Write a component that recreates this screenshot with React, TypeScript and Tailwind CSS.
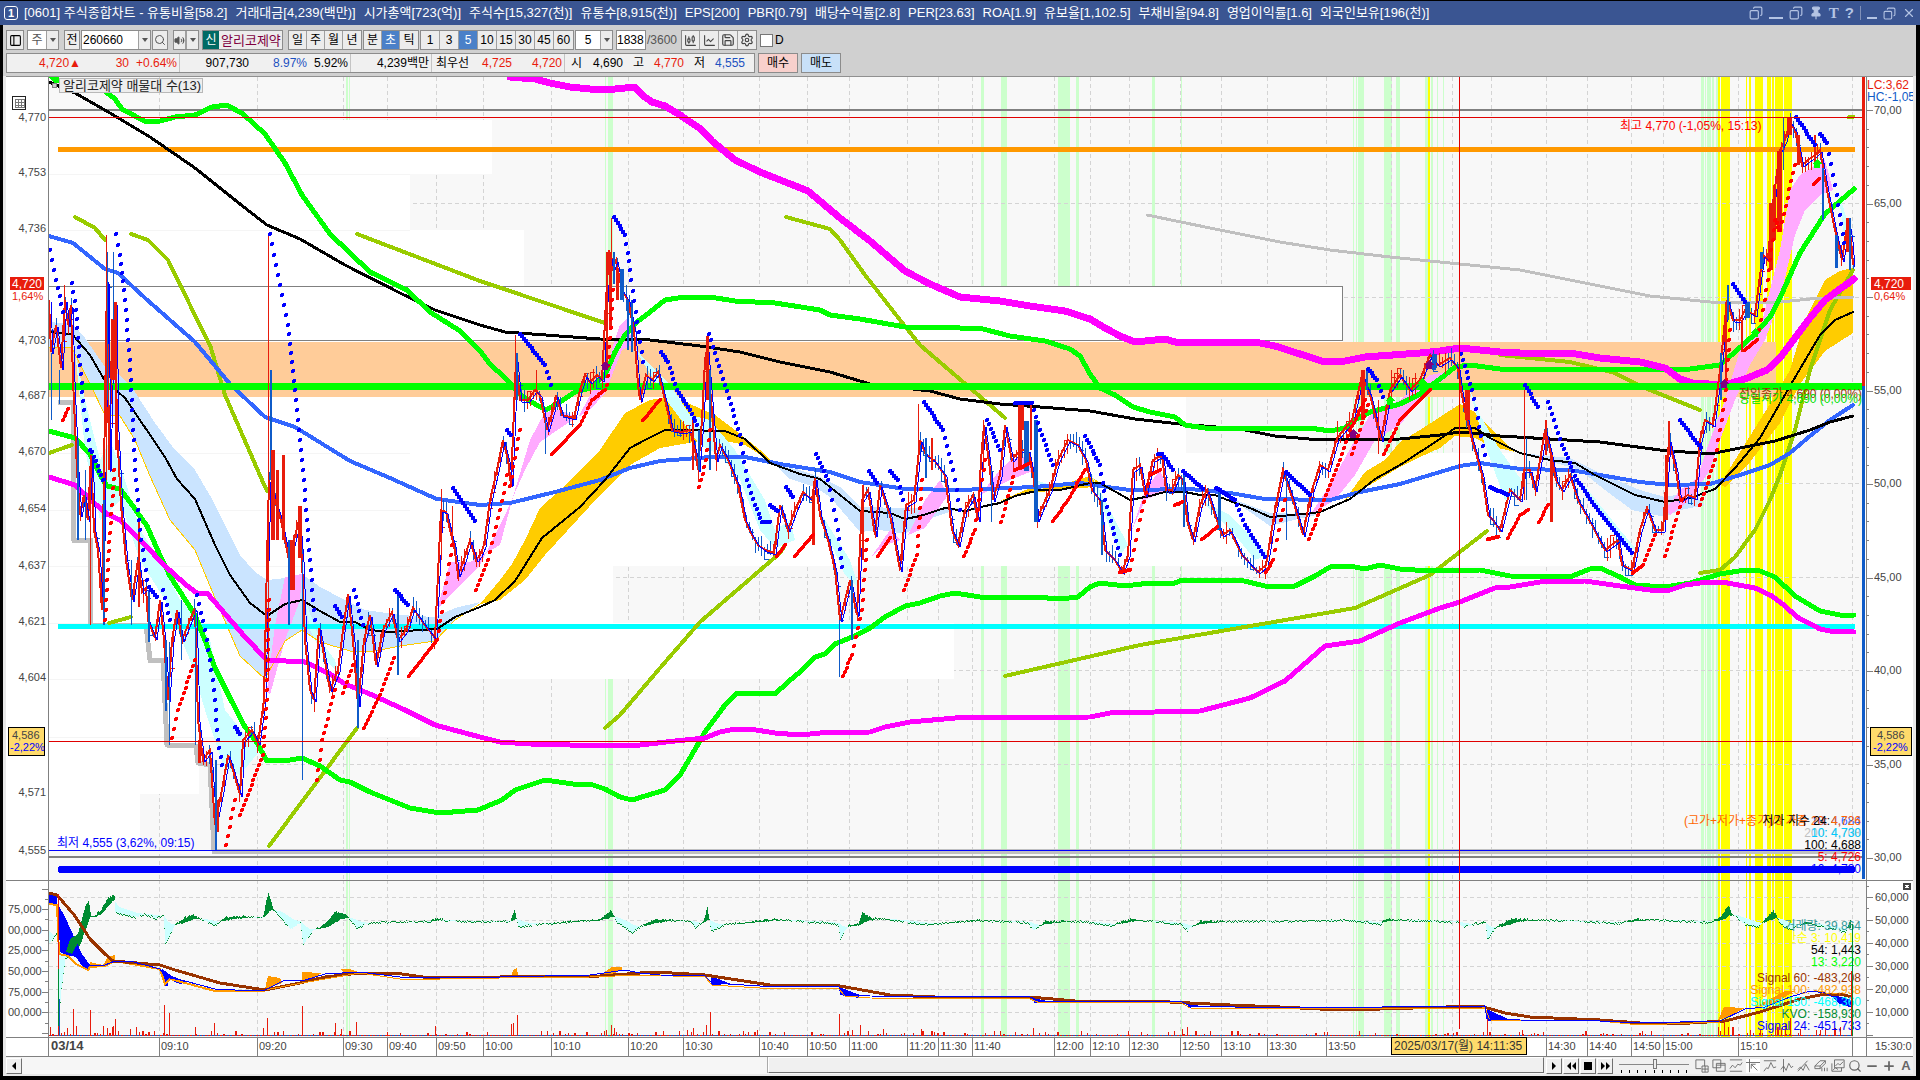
import React from "react";
import {
  Search, Volume2, Save, Settings, Pin, X, Copy, Minus, Plus,
  CandlestickChart, LineChart, PanelLeft,
} from "lucide-react";

type Pt = [number, number];

const parse = (s: string): Pt[] =>
  s.trim().split(/\s+/).map((p) => p.split(",").map(Number) as Pt);

const valueAt = (pts: Pt[], x: number): number => {
  for (let i = 1; i < pts.length; i++) {
    if (x <= pts[i][0]) {
      const [x0, y0] = pts[i - 1];
      const [x1, y1] = pts[i];
      return x1 === x0 ? y1 : y0 + ((y1 - y0) * (x - x0)) / (x1 - x0);
    }
  }
  return pts[pts.length - 1][1];
};

const noise = (n: number): number => {
  const v = Math.sin(n * 12.9898) * 43758.5453;
  return v - Math.floor(v);
};

const TIMES: [number, string][] = [
  [159, "09:10"], [257, "09:20"], [343, "09:30"], [387, "09:40"], [436, "09:50"],
  [483, "10:00"], [551, "10:10"], [628, "10:20"], [683, "10:30"], [759, "10:40"],
  [807, "10:50"], [849, "11:00"], [907, "11:20"], [938, "11:30"], [972, "11:40"],
  [1054, "12:00"], [1090, "12:10"], [1129, "12:30"], [1180, "12:50"], [1221, "13:10"],
  [1267, "13:30"], [1326, "13:50"], [1391, ""], [1452, ""], [1491, ""], [1546, "14:30"],
  [1587, "14:40"], [1631, "14:50"], [1663, "15:00"], [1738, "15:10"], [1852, ""],
];

const GREEN_BANDS: Pt[] = [
  [346, 2], [349, 1], [605, 1], [608, 5], [981, 3], [1001, 6], [1058, 12], [1076, 3],
  [1152, 3], [1181, 1], [1353, 1], [1356, 1], [1358, 6], [1384, 8], [1396, 4], [1425, 3],
  [1431, 2], [1437, 1], [1443, 1], [1701, 3], [1705, 1], [1707, 4], [1712, 2], [1716, 2],
];
const YELLOW_BANDS: Pt[] = [
  [1428, 2], [1718, 2], [1721, 9], [1746, 1], [1749, 2], [1755, 8], [1767, 4], [1772, 2],
  [1775, 8], [1784, 8],
];

const VOLUME_PROFILE: [number, number, number][] = [
  [120, 54, 492], [174, 56, 410], [230, 56, 524], [286, 56, 1343], [397, 56, 1186],
  [453, 57, 1514], [510, 56, 1630], [566, 57, 613], [623, 56, 954], [679, 58, 420],
  [737, 57, 199], [794, 57, 140],
];

const PRICE = parse(`49,300 51,352 56,325 61,368 65,300 68,325 71,305 73,380 77,470 80,515 84,495 88,520 91,455 94,530 98,550
102,610 104,470 107,280 109,470 112,340 115,302 117,430 121,505 126,560 132,600 138,560 142,592 146,588 148,620 155,638 160,600
164,640 168,700 172,640 177,610 182,640 190,620 195,608 198,720 203,760 210,750 215,825 222,790 228,755 233,770 240,795 243,740
252,730 258,743 264,700 267,560 269,480 275,500 281,520 289,560 294,540 299,520 302,560 305,640 310,690 314,700 319,628 323,650
330,690 338,670 343,630 348,594 353,640 358,705 364,640 370,615 376,665 383,630 392,612 398,640 406,630 413,608 425,625 435,638
441,510 446,512 450,530 454,545 458,575 464,560 470,540 476,560 480,555 484,545 490,500 497,470 503,440 508,460 511,485 516,360
520,400 528,400 535,390 540,395 547,430 553,410 556,395 562,415 574,418 580,390 585,375 590,382 597,375 602,380 606,300 609,250
612,270 616,260 622,290 628,300 634,330 638,385 640,400 646,375 652,380 658,372 665,400 672,430 682,432 690,430 696,455 698,470
702,420 705,360 707,350 711,400 716,460 720,445 728,460 738,485 745,520 752,535 758,545 765,550 774,553 780,505 788,530 795,510
803,492 812,500 815,478 820,515 828,540 835,570 840,620 850,580 857,615 862,500 868,490 875,535 880,485 890,515 900,570 906,505
914,500 920,440 926,455 934,460 945,475 952,530 958,545 965,510 973,495 978,520 981,460 984,425 990,470 993,500 1000,475 1005,425
1012,460 1020,450 1028,450 1034,480 1037,520 1043,505 1050,490 1058,460 1068,440 1078,445 1086,460 1092,490 1100,500 1105,550
1115,560 1122,572 1128,555 1133,470 1140,465 1145,495 1153,460 1162,455 1166,490 1172,490 1178,475 1183,480 1187,520 1193,540
1200,505 1207,490 1215,515 1222,535 1230,530 1242,555 1258,572 1266,565 1275,510 1283,470 1293,500 1303,535 1312,490 1320,465
1328,470 1337,438 1352,420 1362,375 1370,395 1381,440 1390,390 1400,375 1410,390 1420,380 1430,355 1438,365 1450,358 1458,368
1461,390 1466,415 1472,440 1478,460 1482,475 1488,515 1493,520 1500,530 1510,490 1520,500 1524,470 1530,470 1535,490 1545,430
1550,450 1556,480 1562,490 1570,475 1578,500 1592,525 1605,550 1618,540 1622,565 1632,570 1640,530 1647,508 1655,530 1663,530
1669,440 1676,470 1680,500 1688,495 1695,498 1700,440 1705,420 1713,425 1720,370 1725,320 1727,300 1733,320 1740,320 1745,310
1755,315 1760,275 1763,255 1768,260 1772,210 1776,180 1780,150 1785,140 1790,122 1795,130 1802,165 1808,160 1815,155 1820,150
1827,190 1835,230 1842,260 1848,220 1851,240 1853,265`);

const SPIKES: [number, number, number, number, string][] = [
  [51, 353, 420, 1, "#0f5bc8"], [59, 370, 404, 1, "#0f5bc8"], [64, 285, 340, 1, "#e81c0c"],
  [77, 440, 540, 2, "#0f5bc8"], [85, 470, 540, 1, "#0f5bc8"], [90, 455, 625, 1, "#e81c0c"],
  [103, 500, 625, 2, "#0f5bc8"], [106, 235, 480, 1, "#e81c0c"], [107, 252, 400, 1, "#0f5bc8"],
  [111, 319, 380, 4, "#e81c0c"], [113, 252, 320, 1, "#0f5bc8"], [115, 302, 450, 2, "#e81c0c"],
  [131, 560, 625, 1, "#0f5bc8"], [148, 590, 642, 2, "#0f5bc8"], [138, 522, 607, 2, "#e81c0c"],
  [165, 640, 711, 2, "#0f5bc8"], [169, 642, 745, 1, "#0f5bc8"], [181, 600, 660, 1, "#0f5bc8"],
  [195, 608, 745, 1, "#0f5bc8"], [198, 740, 763, 3, "#e81c0c"], [215, 760, 850, 2, "#0f5bc8"],
  [217, 800, 832, 2, "#e81c0c"], [268, 235, 680, 1, "#e81c0c"], [270, 370, 480, 2, "#0f5bc8"],
  [271, 450, 540, 4, "#e81c0c"], [276, 470, 540, 3, "#e81c0c"], [282, 455, 540, 3, "#e81c0c"],
  [288, 540, 625, 2, "#0f5bc8"], [290, 540, 590, 5, "#e81c0c"], [298, 506, 558, 4, "#e81c0c"],
  [302, 560, 780, 1, "#0f5bc8"], [357, 640, 728, 2, "#0f5bc8"], [397, 590, 675, 2, "#0f5bc8"],
  [441, 489, 560, 1, "#e81c0c"], [452, 506, 540, 1, "#e81c0c"], [515, 335, 400, 1, "#e81c0c"],
  [516, 353, 400, 2, "#0f5bc8"], [536, 370, 400, 1, "#e81c0c"], [545, 420, 454, 1, "#0f5bc8"],
  [606, 252, 370, 2, "#e81c0c"], [611, 218, 290, 1, "#e81c0c"], [609, 252, 330, 3, "#e81c0c"],
  [613, 252, 284, 2, "#0f5bc8"], [616, 268, 300, 3, "#e81c0c"], [620, 269, 300, 4, "#0f5bc8"],
  [627, 300, 350, 2, "#0f5bc8"], [631, 300, 352, 2, "#0f5bc8"], [692, 420, 470, 2, "#e81c0c"],
  [698, 430, 470, 2, "#0f5bc8"], [706, 336, 400, 3, "#e81c0c"], [709, 370, 470, 2, "#0f5bc8"],
  [812, 490, 545, 3, "#e81c0c"], [839, 620, 677, 1, "#0f5bc8"], [851, 580, 640, 2, "#0f5bc8"],
  [862, 485, 560, 2, "#e81c0c"], [918, 404, 450, 1, "#e81c0c"], [925, 438, 478, 2, "#0f5bc8"],
  [931, 438, 470, 2, "#e81c0c"], [983, 420, 470, 1, "#e81c0c"], [991, 470, 522, 1, "#0f5bc8"],
  [1018, 404, 470, 4, "#e81c0c"], [1024, 421, 471, 5, "#0f5bc8"], [1022, 404, 430, 2, "#e81c0c"],
  [1030, 404, 450, 2, "#e81c0c"], [1034, 420, 522, 4, "#0f5bc8"], [1101, 500, 555, 2, "#0f5bc8"],
  [1183, 472, 527, 2, "#0f5bc8"], [1218, 490, 530, 3, "#0f5bc8"], [1286, 472, 540, 1, "#0f5bc8"],
  [1337, 421, 440, 1, "#e81c0c"], [1361, 370, 420, 4, "#e81c0c"], [1366, 370, 390, 2, "#0f5bc8"],
  [1378, 400, 454, 1, "#e81c0c"], [1391, 370, 400, 1, "#e81c0c"], [1432, 354, 370, 4, "#0f5bc8"],
  [1465, 390, 420, 5, "#e81c0c"], [1524, 390, 500, 1, "#e81c0c"], [1526, 438, 500, 1, "#0f5bc8"],
  [1545, 420, 455, 2, "#e81c0c"], [1550, 455, 522, 3, "#e81c0c"], [1665, 455, 520, 3, "#e81c0c"],
  [1668, 421, 455, 2, "#e81c0c"], [1720, 353, 400, 2, "#0f5bc8"], [1725, 302, 385, 2, "#e81c0c"],
  [1727, 285, 320, 2, "#0f5bc8"], [1741, 320, 352, 2, "#e81c0c"], [1745, 302, 318, 5, "#0f5bc8"],
  [1760, 252, 269, 3, "#0f5bc8"], [1769, 203, 270, 4, "#e81c0c"], [1773, 185, 240, 3, "#e81c0c"],
  [1777, 151, 232, 5, "#e81c0c"], [1783, 118, 170, 1, "#0f5bc8"], [1787, 117, 135, 5, "#e81c0c"],
  [1797, 135, 165, 3, "#e81c0c"], [1814, 135, 166, 2, "#e81c0c"], [1822, 168, 220, 2, "#0f5bc8"],
  [1835, 235, 268, 3, "#0f5bc8"], [1846, 218, 252, 3, "#e81c0c"], [1849, 218, 270, 2, "#0f5bc8"],
];

const SAR_BLUE = `50,250 56,280 63,312|72,283 76,310 80,365 84,410 90,450|92,452 103,480|116,234 120,255 124,290 130,360 133,430 136,480 140,530 147,580|149,587 157,597|163,590 170,620|197,595 205,630 213,680 218,740 222,765|235,727 240,734|270,234 278,275 288,325 295,390 300,440 304,480 309,550 315,620|335,606 342,617|354,590 363,625|395,590 408,605|453,488 475,521|507,430 511,435|520,334 545,365 551,385|614,217 625,235 630,270 637,322 643,362|661,352 668,362 677,390 690,410 697,425|709,334 725,385 740,435 747,480 755,505 762,522 770,522|786,487 793,497|770,505 778,511|816,454 828,480 838,530 842,567|869,471 877,483|890,471 898,480 903,500|924,402 943,430 953,470 960,510|987,420 1000,450|1015,403 1032,403 1040,430 1053,465|1085,436 1100,465 1105,500 1120,555|1158,454 1162,454 1173,470|1183,471 1203,489|1216,488 1235,500 1245,525 1265,557|1286,472 1310,495|1368,369 1377,380 1383,397|1461,354 1472,390 1485,455|1490,487 1508,495|1525,385 1538,407|1548,402 1562,445 1577,480 1598,510 1632,553|1680,420 1701,448|1733,284 1745,302|1796,117 1815,145|1820,134 1827,143 1835,185 1840,215 1844,243`.split("|").map(parse);
const SAR_RED = `63,420 68,409|105,620 108,560 112,505 114,470|172,738 178,710 195,660|226,845 235,800|240,815 263,755 267,700 269,600|317,780 322,740 335,690|343,693 353,665|364,728 380,695 394,658|409,676 437,640 452,545|476,590 488,560 500,510 507,475|510,486 520,430|552,454 580,425 592,400 605,390|607,385 613,290|643,420 660,400|699,487 706,460 710,430|777,556 785,545|795,556 813,535|843,676 852,655 862,610 867,540|878,556 890,538|904,590 917,555 922,480|964,556 975,530 985,460|1001,522 1010,490 1015,470 1030,463|1053,521 1068,500 1085,470|1120,572 1130,570 1140,520 1150,475 1160,470|1175,505 1182,502|1202,539 1217,527|1266,572 1273,560 1285,500|1309,539 1320,510 1340,460 1350,430 1365,400|1352,454 1368,405|1384,454 1400,420 1430,390|1488,539 1498,537|1508,538 1520,515 1528,510|1539,522 1548,505|1633,573 1643,565 1655,535|1665,556 1676,520 1682,500|1700,505 1715,460 1725,400 1730,330|1745,350 1757,340 1765,300 1775,220 1780,230 1795,165|1814,184 1819,179`.split("|").map(parse);

const OLIVE = [
  "75,217 95,228 105,240",
  "131,234 148,240 168,260 190,305 210,345 225,395 262,480 267,491",
  "357,234 480,281 605,323",
  "786,217 830,229 840,240 865,275 900,320 920,345 1005,418",
  "49,453 72,445", "109,623 131,617", "269,846 357,728",
  "605,728 620,715 660,668 700,622 780,553 785,545",
  "1005,676 1140,645 1355,608 1430,575 1487,531",
  "1500,355 1570,362 1615,373 1640,386 1700,410",
  "1700,573 1720,570 1735,557 1755,530 1770,500 1780,475 1795,430 1810,370 1830,310 1853,270",
  "1849,117 1853,117",
];

const SKY_CLOUDS = [
  "49,322 73,324 85,338 105,367 120,375 135,392 155,423 175,450 195,470 212,499 225,525 240,555 255,572 267,580 285,578 302,574 320,587 345,600 365,610 400,615 435,617 455,608 480,602 455,620 435,641 400,646 375,651 350,651 320,642 302,630 285,641 265,679 240,656 215,598 195,550 170,520 150,476 135,440 120,416 105,415 90,384 72,348 49,347",
  "775,465 800,470 820,477 840,487 860,507 905,508 930,508 960,508 950,512 925,520 905,534 880,530 860,532 830,497 815,487 790,479",
  "1230,498 1270,513 1305,514 1320,514 1290,521 1270,526",
  "1520,453 1570,458 1600,473 1640,490 1665,497 1690,492 1705,505 1680,510 1665,517 1632,510 1605,490 1580,470",
];
const GOLD_CLOUDS = [
  "480,604 500,580 512,564 525,540 540,508 560,490 600,450 625,413 650,400 670,397 690,404 715,415 735,430 760,450 775,464 745,445 725,441 700,441 660,448 630,465 600,495 545,555 525,580 500,600",
  "1000,501 1030,488 1060,485 1090,476 1105,486 1060,490 1030,493",
  "1345,500 1365,472 1385,460 1400,442 1420,430 1440,417 1460,404 1475,412 1490,428 1515,452 1490,446 1475,438 1455,436 1440,448 1420,457 1400,467 1375,482",
  "1720,484 1740,452 1770,404 1790,370 1805,320 1825,280 1840,271 1853,268 1853,333 1825,351 1800,384 1780,423 1750,462 1725,487",
];
const PINK_CLOUDS = [
  "267,690 275,625 285,577 302,574 300,600 285,640 270,695",
  "437,610 450,562 470,562 500,545 515,490 530,440 545,412 560,410 578,418 590,395 605,370 620,325 628,318 632,345 622,350 605,393 590,410 565,425 540,442 525,470 505,515 480,565 455,590",
  "872,556 890,530 900,540 885,545", "908,535 925,500 940,480 948,495 925,528",
  "980,495 1000,470 1010,460 1030,455 1035,470 1010,480 990,490",
  "1132,530 1145,490 1160,470 1168,490 1145,500",
  "1310,515 1330,485 1355,440 1370,415 1400,400 1430,375 1455,370 1420,400 1400,425 1375,440 1355,475 1335,500",
  "1665,510 1680,490 1695,480 1700,470 1710,440 1725,400 1740,350 1760,330 1770,290 1780,250 1790,190 1800,175 1815,165 1825,160 1833,190 1820,195 1805,210 1795,235 1780,300 1765,340 1750,365 1735,400 1720,440 1710,470 1690,500 1670,515",
];
const CYAN_CLOUDS = [
  "75,350 85,400 100,460 110,440 125,480 140,530 160,560 180,600 195,615 210,640 225,710 245,735 262,748 240,775 225,770 205,710 190,660 165,600 140,560 120,500 100,520 85,450",
  "305,600 320,640 335,660 340,675 325,660 310,630",
  "632,345 650,365 670,385 690,415 710,420 735,450 765,500 775,530 790,520 795,540 775,548 760,530 740,480 720,455 700,445 670,405",
  "820,512 850,560 860,590 845,575 825,530", "1035,480 1050,485 1040,490",
  "1092,475 1115,520 1128,545 1120,555 1105,515",
  "1200,500 1230,515 1268,555 1255,560 1235,535 1210,510",
  "1468,385 1480,415 1500,450 1525,485 1505,500 1485,445",
  "1580,480 1620,530 1637,550 1625,548 1600,515", "1838,190 1850,230 1846,250",
];

const LINES: [string, string, number][] = [
  ["#c0c0c0", "1147,215 1210,228 1280,242 1330,250 1390,257 1440,262 1460,264 1520,270 1580,282 1650,296 1710,302 1770,303 1810,299 1853,297", 3],
  ["#3366ff", "49,236 73,243 105,269 118,273 145,298 195,342 230,384 265,417 295,427 350,461 390,478 430,496 437,499 480,505 510,503 555,492 600,480 630,468 660,461 710,457 745,457 780,464 830,472 860,482 905,489 960,490 1035,487 1080,483 1100,486 1130,490 1190,489 1230,493 1265,499 1330,500 1360,492 1400,484 1440,472 1460,466 1480,463 1520,469 1570,470 1600,475 1640,482 1670,485 1710,484 1740,475 1770,465 1790,453 1810,436 1830,420 1853,405", 4],
  ["#000000", "49,82 75,93 110,113 150,137 195,168 245,208 267,225 300,239 345,265 400,293 435,310 480,325 505,332 600,339 650,340 700,346 740,352 780,362 830,372 870,384 930,391 960,399 1000,404 1040,407 1090,411 1135,419 1180,424 1240,429 1275,436 1320,440 1400,439 1440,435 1460,432 1500,436 1600,442 1660,450 1710,454 1740,448 1775,441 1810,430 1830,422 1853,416", 3],
  ["#00ff00", "106,92 115,99 122,109 135,116 146,122 160,121 175,117 195,115 212,107 227,105 243,114 265,134 285,163 302,195 330,234 370,272 407,290 430,312 460,331 480,351 490,364 505,378 522,396 535,404 546,410 560,402 575,392 590,388 605,375 615,352 625,335 637,322 650,312 665,300 685,297 710,297 735,301 775,303 820,310 830,315 860,319 905,327 960,328 983,329 1010,336 1045,341 1070,349 1080,356 1090,374 1100,388 1115,395 1133,407 1150,412 1175,417 1185,425 1205,428 1310,428 1330,431 1345,428 1355,420 1370,412 1400,404 1420,394 1440,379 1455,367 1470,365 1500,369 1670,369 1690,369 1720,365 1735,352 1755,334 1770,317 1780,298 1800,253 1825,214 1840,201 1854,189", 5],
  ["#00ff00", "49,431 75,438 90,454 102,478 107,486 120,489 130,502 147,526 158,551 170,576 195,615 205,640 215,668 230,698 245,727 257,743 267,761 290,760 302,758 320,766 340,780 350,782 370,792 390,800 410,808 440,813 478,810 502,800 515,790 545,780 580,785 590,784 605,789 620,797 632,800 645,796 665,790 680,775 690,758 705,732 725,705 737,693 775,694 788,682 800,672 815,657 825,654 835,644 855,636 870,628 885,617 905,606 920,603 940,596 955,593 980,597 1035,597 1060,599 1078,597 1090,587 1100,583 1125,586 1150,583 1175,583 1182,580 1240,580 1265,586 1295,586 1315,576 1330,567 1350,566 1365,569 1380,565 1400,569 1430,571 1480,570 1510,576 1570,577 1590,569 1600,568 1620,577 1635,585 1665,587 1690,583 1720,574 1745,570 1760,571 1775,577 1795,596 1820,611 1840,615 1854,615", 5],
  ["#ff00ff", "49,477 75,485 93,502 107,514 120,520 145,545 165,566 185,584 197,593 207,593 220,608 245,637 267,660 305,662 330,674 345,684 370,694 405,710 435,725 480,737 500,742 530,744 570,745 605,746 640,745 675,741 705,738 720,732 735,729 750,729 775,733 800,735 820,733 870,732 885,727 910,722 955,718 1090,717 1110,713 1200,711 1250,698 1285,681 1325,646 1360,641 1400,623 1440,608 1460,602 1495,588 1510,587 1540,582 1585,581 1620,586 1650,590 1667,591 1685,585 1700,583 1722,582 1755,588 1772,596 1785,606 1797,617 1820,629 1830,631 1854,632", 5],
  ["#ff00ff", "510,77 535,79 550,83 570,87 600,90 615,89 635,87 642,95 652,102 665,106 680,115 702,130 712,141 735,160 760,172 808,191 840,218 870,241 905,271 930,284 960,297 1000,301 1030,306 1065,311 1090,319 1105,328 1120,336 1135,342 1165,339 1175,342 1255,342 1275,346 1300,354 1325,362 1345,361 1365,357 1420,353 1440,351 1460,348 1500,352 1520,353 1570,353 1600,358 1640,362 1665,368 1680,379 1692,383 1725,385 1745,379 1767,370 1780,358 1795,338 1810,318 1825,300 1840,289 1854,279", 7],
  ["#000000", "49,332 72,334 90,355 105,381 125,398 165,457 177,479 195,499 215,545 230,575 250,603 267,616 285,604 302,600 320,611 340,622 355,622 370,630 390,632 437,629 455,617 480,607 495,600 515,581 542,538 580,507 605,480 630,448 645,440 665,430 680,430 725,431 745,439 770,463 800,474 820,479 840,495 860,511 890,513 905,519 920,516 945,508 965,511 985,506 1000,503 1015,496 1040,490 1060,490 1090,483 1100,483 1130,500 1150,496 1165,492 1185,492 1200,495 1215,495 1230,501 1250,508 1270,517 1305,514 1320,512 1350,499 1375,479 1400,465 1420,452 1440,439 1455,428 1475,428 1490,438 1520,453 1550,460 1575,463 1595,475 1635,495 1665,502 1690,498 1715,489 1735,468 1760,438 1790,386 1820,335 1835,320 1853,312", 2],
];

const GOLD_EDGE = "49,347 72,348 90,384 105,415 120,416 135,440 150,476 170,520 195,550 215,598 240,656 265,679 285,641 302,630 320,642 350,651 375,651 400,646 435,641 455,620 480,604";

const LEFT_PRICES: [number, string][] = [
  [117, "4,770"], [172, "4,753"], [228, "4,736"], [340, "4,703"], [395, "4,687"], [451, "4,670"],
  [508, "4,654"], [565, "4,637"], [621, "4,621"], [677, "4,604"], [792, "4,571"], [850, "4,555"],
];
const RIGHT_PERCENTS: [number, string][] = [
  [110, "70,00"], [203, "65,00"], [390, "55,00"], [483, "50,00"], [577, "45,00"],
  [670, "40,00"], [764, "35,00"], [857, "30,00"],
];

const Bands = ({ y, h }: { y: number; h: number }) => (
  <g>
    {GREEN_BANDS.map(([x, w]) => <rect key={x} x={x} y={y} width={w} height={h} fill="#ccffcc" />)}
    {YELLOW_BANDS.map(([x, w]) => <rect key={x} x={x} y={y} width={w} height={h} fill="#ffff00" />)}
  </g>
);

const Grid = ({ y1, y2, rows }: { y1: number; y2: number; rows: number[] }) => (
  <g stroke="#d4d4d4" strokeWidth="1" strokeDasharray="4 3">
    {TIMES.map(([x]) => <line key={x} x1={x + 0.5} x2={x + 0.5} y1={y1} y2={y2} />)}
    {rows.map((y) => <line key={y} x1="49" x2="1862" y1={y + 0.5} y2={y + 0.5} />)}
  </g>
);

const Polys = ({ list, fill }: { list: string[]; fill: string }) => (
  <g fill={fill}>{list.map((p) => <polygon key={p} points={p} />)}</g>
);

const MarkerArrow = ({ x, y, color }: { x: number; y: number; color: string }) => (
  <path d={`M${x} ${y - 4}l5 5h-2v4h-6v-4h-2z`} fill={color} />
);

const SarDots = ({ list, color }: { list: Pt[][]; color: string }) => (
  <g fill={color}>
    {list.flatMap((pts, k) =>
      pts.slice(1).flatMap(([x1, y1], i) => {
        const [x0, y0] = pts[i];
        const n = Math.max(1, Math.round(Math.max((x1 - x0) / 2, Math.hypot(x1 - x0, y1 - y0) / 10)));
        return Array.from({ length: n + 1 }, (_, j) => (
          <circle key={`${k}-${i}-${j}`} cx={Math.round(x0 + ((x1 - x0) * j) / n)} cy={Math.round(y0 + ((y1 - y0) * j) / n)} r="2" />
        ));
      }),
    )}
  </g>
);

const Wicks = () => {
  const out: React.ReactElement[] = [];
  for (let x = 50; x < 1854; x += 3) {
    const y = valueAt(PRICE, x);
    const up = valueAt(PRICE, x + 3) < y;
    const a = Math.round(y - 2 - noise(x) * 10);
    const b = Math.round(y + 2 + noise(x + 7) * 11);
    const fill = up ? "#e81c0c" : "#0f5bc8";
    out.push(<rect key={x} x={x} y={a} width="1" height={b - a} fill={fill} />);
    if (noise(x * 3) > 0.7) {
      out.push(<rect key={`t${x}`} x={x} y={up ? a : b} width="5" height="1" fill={fill} />);
    }
  }
  return <g>{out}</g>;
};

const PRICE_STR = PRICE.map((p) => p.join(",")).join(" ");

const MainChart = () => (
  <svg viewBox="6 77 1907 803" className="block h-auto w-full bg-white text-[12px]" shapeRendering="crispEdges" role="img" aria-label="알리코제약 주가 차트">
    <defs>
      <clipPath id="plot"><rect x="49" y="77" width="1813" height="803" /></clipPath>
    </defs>
    <rect x="49" y="77" width="1815" height="803" fill="#f8f8f8" />
    <g clipPath="url(#plot)">
      <Bands y={77} h={803} />
      <Grid y1={77} y2={880} rows={[203, 297, 390, 483, 577, 670, 764]} />
      {VOLUME_PROFILE.map(([y, h, x]) => <rect key={y} x="49" y={y} width={x - 49} height={h} fill="#fff" />)}
      <g stroke="#f5f5f5">
        {[174, 230, 453, 510, 566, 623, 679, 737].map((y) => <line key={y} x1="49" x2="410" y1={y + 0.5} y2={y + 0.5} />)}
      </g>
      <path d="M49 286.5H1342.5V340.5H49" fill="#fff" stroke="#808080" />
      <rect x="49" y="342" width="1727" height="55" fill="#ffcc99" />
      <rect x="49" y="109" width="1813" height="2" fill="#808080" />
      <Polys list={SKY_CLOUDS} fill="#cae4ff" />
      <Polys list={GOLD_CLOUDS} fill="#ffcc00" />
      <Polys list={CYAN_CLOUDS} fill="#ccffff" />
      <Polys list={PINK_CLOUDS} fill="#ffaaff" />
      <polyline points={GOLD_EDGE} fill="none" stroke="#ffcc00" />
      <polyline points="58,402 73,402 74,540 90,540 90,625 146,625 150,660 163,660 167,745 196,746 198,763 210,765 214,851 1855,851" fill="none" stroke="#c0c0c0" strokeWidth="5" />
      <rect x="58" y="147" width="1797" height="5" fill="#ff9900" />
      <rect x="58" y="624" width="1797" height="5" fill="#00ffff" />
      {OLIVE.map((p) => <polyline key={p} points={p} fill="none" stroke="#99cc00" strokeWidth="4" strokeLinecap="round" />)}
      {LINES.map(([c, p, w]) => (
        <polyline key={p} points={p} fill="none" stroke={c} strokeWidth={w} strokeLinejoin="round" strokeLinecap="round" />
      ))}
      <path d="M49 77h10v6h-5z" fill="#00ff00" />
      <rect x="49" y="383" width="1813" height="7" fill="#00ff00" />
      <Wicks />
      <polyline points={PRICE_STR} fill="none" stroke="#e81c0c" strokeWidth="2" />
      <polyline points={PRICE_STR} fill="none" stroke="#0000ff" strokeWidth="1" transform="translate(2 2)" />
      {SPIKES.map(([x, a, b, w, c]) => <rect key={`${x}-${a}`} x={x} y={a} width={w} height={b - a} fill={c} />)}
      <SarDots list={SAR_BLUE} color="#0000ff" />
      <SarDots list={SAR_RED} color="#ff0000" />
      <MarkerArrow x={605} y={365} color="#800080" />
      <MarkerArrow x={1353} y={433} color="#800080" />
      <MarkerArrow x={1429} y={364} color="#800080" />
      <MarkerArrow x={1724} y={383} color="#800080" />
      <MarkerArrow x={1390} y={400} color="#00ff00" />
      <MarkerArrow x={1422} y={382} color="#00ff00" />
      <MarkerArrow x={1755} y={332} color="#00ff00" />
      <MarkerArrow x={1817} y={163} color="#00ff00" />
      <rect x="49" y="117" width="1813" height="1" fill="#e00000" />
      <rect x="49" y="850" width="1813" height="1" fill="#0000ff" />
      <rect x="49" y="856" width="1813" height="2" fill="#808080" />
      <rect x="58" y="866" width="1797" height="7" rx="3" fill="#0000ff" />
      <rect x="49" y="741" width="1813" height="1" fill="#e00000" />
      <rect x="1459" y="77" width="1" height="803" fill="#e00000" />
    </g>

    <text x="57" y="847" fill="#0000ff">최저 4,555 (3,62%, 09:15)</text>
    <text x="1620" y="130" fill="#ff0000">최고 4,770 (-1,05%, 15:13)</text>
    <text x="1739" y="398" fill="#993300">전일종가 4,690 (0,00%)</text>
    <text x="1739" y="403" fill="#00e000">당일시가 4,690 (0,00%)</text>
    <g textAnchor="end">
      <text x="1861" y="825" fill="#3366ff">18: 4,684</text>
      <text x="1861" y="825" fill="#ff6600">(고가+저가+종가)/3 가중 20: 4,726</text>
      <text x="1830" y="825" fill="#000">저가 지수 24:</text>
      <text x="1861" y="837" fill="#c0c0c0">200: 4,708</text>
      <text x="1861" y="837" fill="#00ccff">10: 4,730</text>
      <text x="1861" y="849" fill="#000">100: 4,688</text>
      <text x="1861" y="861" fill="#ff0000">5: 4,726</text>
      <text x="1861" y="873" fill="#0000ff">10: 4,730</text>
    </g>

    <rect x="59" y="78" width="143" height="14" fill="#eeeeee" stroke="#b8b8b8" />
    <text x="63" y="90" fill="#222" className="text-[13px]">알리코제약 매물대 수(13)</text>
    <rect x="52" y="83" width="4" height="4" fill="#ccc" stroke="#808080" />
    <g fill="none" stroke="#222">
      <rect x="12.5" y="96.5" width="13" height="13" strokeWidth="1" />
      <path d="M15 99h9v8h-9zM15 102h9M15 105h9M18 99v8M21 99v8" stroke="#777" />
    </g>
    <rect x="48" y="77" width="1" height="803" fill="#808080" />
    <g fill="#444" textAnchor="end" className="text-[11px]">
      {LEFT_PRICES.map(([y, t]) => <text key={y} x="46" y={y + 4}>{t}</text>)}
    </g>
    <rect x="10" y="277" width="34" height="13" fill="#e81c0c" />
    <text x="12" y="288" fill="#fff">4,720</text>
    <text x="12" y="300" fill="#e81c0c" className="text-[11px]">1,64%</text>
    <rect x="8.5" y="727.5" width="36" height="28" fill="#ffdb6b" stroke="#000" />
    <text x="12" y="739" fill="#444" className="text-[11px]">4,586</text>
    <text x="10" y="751" fill="#0000ff" className="text-[11px]">-2,22%</text>

    <rect x="1862" y="77" width="3" height="309" fill="#e81c0c" />
    <rect x="1862" y="386" width="3" height="493" fill="#0f5bc8" />
    <rect x="1866" y="77" width="1" height="803" fill="#808080" />
    <g stroke="#808080">
      {Array.from({ length: 41 }, (_, i) => Math.round(110 + i * 18.7)).map((y, i) => (
        <line key={y} x1="1867" x2={i % 5 === 0 ? 1873 : 1869} y1={y + 0.5} y2={y + 0.5} />
      ))}
    </g>
    <text x="1867" y="89" fill="#e81c0c">LC:3,62</text>
    <text x="1867" y="101" fill="#0f5bc8">HC:-1,05</text>
    <g fill="#444" className="text-[11px]">
      {RIGHT_PERCENTS.map(([y, t]) => <text key={y} x="1874" y={y + 4}>{t}</text>)}
    </g>
    <rect x="1871" y="277" width="40" height="13" fill="#e81c0c" />
    <text x="1874" y="288" fill="#fff">4,720</text>
    <text x="1874" y="300" fill="#e81c0c" className="text-[11px]">0,64%</text>
    <rect x="1870.5" y="727.5" width="41" height="28" fill="#ffdb6b" stroke="#000" />
    <text x="1877" y="739" fill="#444" className="text-[11px]">4,586</text>
    <text x="1873" y="751" fill="#0000ff" className="text-[11px]">-2,22%</text>
  </svg>
);

const OSC = parse(`49,945 52,940 57,932 58,1030 61,990 65,960 72,955 78,940 84,912 88,902 91,918 100,912 108,898 114,897 115,913 125,916 135,918
145,915 155,919 163,916 165,944 170,935 175,925 185,918 193,916 205,922 215,926 225,918 245,917 262,919 268,894 273,910 290,930
300,924 303,945 312,932 325,924 335,912 345,915 357,929 370,923 430,922 437,919 450,922 510,922 514,910 518,928 530,926 560,923
600,920 611,911 617,924 632,933 642,926 655,920 690,922 695,928 703,922 707,908 711,932 725,925 750,923 770,920 830,924 838,926
840,940 848,926 858,925 862,913 870,919 885,920 900,922 925,925 975,921 1020,923 1028,924 1033,931 1045,922 1080,922 1110,926
1130,920 1160,923 1180,925 1187,931 1200,922 1280,922 1350,921 1380,925 1384,920 1458,923 1461,928 1475,924 1485,923 1487,940
1495,928 1510,920 1550,921 1620,924 1635,920 1710,923 1720,918 1728,906 1732,915 1745,925 1758,928 1765,920 1773,911 1780,925
1790,930 1805,923 1820,927 1835,930 1845,933 1850,921 1852,1036`);

const Oscillator = () => {
  const out: React.ReactElement[] = [];
  let slow = 930;
  for (let x = 49; x < 1852; x++) {
    const y = valueAt(OSC, x) + (noise(x) - 0.5) * 2;
    slow += (Math.min(y, 960) - slow) * (x < 120 ? 0.13 : 0.06);
    const above = y < slow;
    out.push(
      <rect key={x} x={x} y={Math.round(Math.min(y, slow))} width="1" height={Math.max(1, Math.round(Math.abs(y - slow)))} fill={above ? "#008c32" : "#ccffff"} />,
    );
    if (!above && noise(x >> 2) > 0.25) {
      out.push(<rect key={`e${x}`} x={x} y={Math.round(y)} width="1" height="1" fill="#008c32" />);
    }
  }
  return <g>{out}</g>;
};

const VOL: Pt[] = [
  [50, 9], [58, 10], [73, 27], [76, 10], [90, 26], [103, 10], [107, 8], [113, 10], [115, 17], [130, 7], [164, 31],
  [169, 23], [195, 9], [214, 13], [263, 8], [267, 18], [302, 30], [335, 13], [341, 7], [356, 14], [387, 4], [435, 10],
  [511, 12], [513, 13], [517, 21], [606, 6], [611, 11], [614, 8], [663, 5], [687, 6], [693, 8], [706, 11], [710, 24],
  [743, 5], [757, 6], [839, 22], [852, 6], [860, 11], [883, 7], [921, 7], [1000, 5], [1033, 8], [1128, 5], [1182, 7],
  [1187, 9], [1359, 5], [1487, 17], [1522, 6], [1718, 9], [1724, 14], [1728, 9], [1760, 7], [1775, 10], [1781, 8],
  [1785, 12], [1790, 18], [1800, 7], [1820, 6], [1840, 9],
];

const VolumeBars = () => (
  <g fill="#e81c0c">
    <rect x="49" y="1036" width="1803" height="1" fill="#0f5bc8" />
    {Array.from({ length: 600 }, (_, i) => 49 + i * 3).map((x) => {
      const h = 1 + Math.floor(noise(x * 5) ** 4 * (x < 160 || x > 1715 ? 9 : 5));
      return <rect key={x} x={x} y={1037 - h} width={noise(x) > 0.6 ? 2 : 1} height={h} />;
    })}
    {VOL.map(([x, h]) => <rect key={`v${x}`} x={x} y={1037 - h} width="1" height={h} />)}
  </g>
);

const LEGEND: [number, string, string][] = [
  [931, "#339999", "거래량: 39,864"], [943, "#ffff00", "단순 3: 10,419"], [955, "#000000", "54: 1,443"],
  [967, "#00ff00", "13: 3,220"], [983, "#993300", "Signal 60: -483,208"], [995, "#ff9900", "Signal 100: -482,938"],
  [1007, "#00ffff", "Signal 150: -468,360"], [1019, "#008c32", "KVO: -158,930"], [1031, "#0000ff", "Signal 24: -451,733"],
];

const LowerChart = () => (
  <svg viewBox="6 881 1907 177" className="block h-auto w-full bg-white text-[12px]" shapeRendering="crispEdges" role="img" aria-label="거래량 지표">
    <rect x="49" y="881" width="1817" height="157" fill="#f8f8f8" />
    <Bands y={881} h={157} />
    <Grid y1={881} y2={1038} rows={[898, 921, 944, 967, 990, 1013]} />
    <Oscillator />
    <rect x="58" y="945" width="1" height="91" fill="#008c32" />
    <polygon points="58,905 66,920 76,942 82,955 90,966 90,971 84,970 76,958 66,956 60,953" fill="#0000ff" />
    <polygon points="66,953 70,940 78,935 86,905 89,902 91,916 86,930 80,940 72,955" fill="#008c32" />
    <polygon points="49,894 57,896 57,906 49,905" fill="#0000ff" />
    <Polys fill="#0000ff" list={[
      "162,970 172,977 187,983 180,985 168,980 168,987 165,987",
      "711,977 731,985 711,986", "839,988 860,996 859,999 840,996", "1033,999 1047,1002 1034,1004",
      "1187,1003 1200,1007 1188,1009", "1487,1010 1510,1021 1487,1022", "1830,995 1852,1001 1852,1009 1838,1004",
    ]} />
    <Polys fill="#ff9900" list={[
      "90,963 103,966 90,967", "103,966 108,958 115,956 115,962", "265,990 268,977 280,979 282,984",
      "302,973 322,974 310,981 302,982", "340,970 350,970 358,973 345,974", "511,977 514,970 517,969 518,977",
      "600,976 612,968 622,968 622,971 612,975", "1718,1021 1724,1008 1745,1009 1730,1017",
      "1755,1008 1785,992 1795,992 1775,1004",
    ]} />
    <polyline fill="none" stroke="#ff9900" strokeWidth="2" points="49,905 57,906 59,955 68,957 76,965 88,971 90,968 105,967 115,962 160,970 165,985 170,980 185,984 215,992 265,992" />
    <polyline fill="none" stroke="#993300" strokeWidth="3" points="49,894 57,896 75,917 90,940 105,955 113,962 160,966 175,971 220,984 265,991 300,984 325,978 360,974 395,974 430,979 500,978 600,977 640,974 655,973 705,976 770,986 840,987 890,996 935,998 1030,998 1075,1002 1170,1003 1230,1006 1280,1008 1320,1010 1380,1010 1480,1007 1505,1014 1530,1018 1600,1021 1640,1024 1690,1024 1725,1022 1760,1013 1800,1000 1820,996 1840,995 1852,998" />
    <polyline fill="none" stroke="#ff9900" points="265,991 302,984 360,974 400,980 440,980 500,979 590,978 640,976 705,978 712,986 760,989 838,989 845,997 870,999 1030,1000 1040,1004 1180,1003 1190,1009 1280,1010 1485,1009 1490,1021 1600,1022 1640,1026 1720,1023" />
    <polyline fill="none" stroke="#0000ff" points="90,967 105,966 115,962 130,962 160,970 165,978 185,982 215,990 235,991 265,991 285,981 302,982 325,975 360,973 400,978 500,978 590,976 625,971 640,974 660,976 705,977 712,984 760,987 838,987 845,995 870,997 1030,998 1040,1002 1180,1002 1190,1007 1280,1009 1485,1007 1487,1020 1520,1021 1600,1022 1640,1024 1720,1022 1745,1010 1765,1008 1790,998 1810,992 1825,994 1850,1007" />
    <VolumeBars />
    <rect x="58" y="895" width="1" height="75" fill="#e81c0c" />
    <rect x="59" y="1000" width="1" height="37" fill="#0f5bc8" />
    <g textAnchor="end">
      {LEGEND.map(([y, c, t]) => <text key={y} x="1861" y={y} fill={c}>{t}</text>)}
    </g>
    <rect x="1852" y="925" width="1" height="112" fill="#008c32" />
    <rect x="1851" y="972" width="1" height="65" fill="#e81c0c" />
    <rect x="1459" y="881" width="1" height="149" fill="#e00000" />

    <rect x="6" y="881" width="1907" height="1" fill="#808080" />
    <rect x="48" y="881" width="1" height="177" fill="#808080" />
    <rect x="1866" y="881" width="1" height="177" fill="#808080" />
    <rect x="6" y="1038" width="1907" height="1" fill="#808080" />
    <rect x="6" y="1057" width="1907" height="1" fill="#808080" />
    <g stroke="#808080">
      {[890, 910, 931, 951, 972, 993, 1013, 1034].map((y) => <line key={y} x1="42" x2="48" y1={y + 0.5} y2={y + 0.5} />)}
      {[900, 920, 941, 962, 982, 1003, 1024].map((y) => <line key={y} x1="45" x2="48" y1={y + 0.5} y2={y + 0.5} />)}
      {[898, 921, 944, 967, 990, 1013, 1036].map((y) => <line key={y} x1="1867" x2="1873" y1={y + 0.5} y2={y + 0.5} />)}
      {[887, 909, 932, 955, 978, 1001, 1024].map((y) => <line key={y} x1="1867" x2="1869" y1={y + 0.5} y2={y + 0.5} />)}
    </g>
    <g fill="#444" className="text-[11px]">
      {([[910, "75,000"], [931, "00,000"], [951, "25,000"], [972, "50,000"], [993, "75,000"], [1013, "00,000"]] as [number, string][]).map(([y, t]) => (
        <text key={y} x="8" y={y + 4}>{t}</text>
      ))}
      {([[898, "60,000"], [921, "50,000"], [944, "40,000"], [967, "30,000"], [990, "20,000"], [1013, "10,000"]] as [number, string][]).map(([y, t]) => (
        <text key={y} x="1875" y={y + 4}>{t}</text>
      ))}
    </g>
    <rect x="1903" y="884" width="8" height="7" fill="#444" />
    <path d="M1905.5 886l3 3m0-3l-3 3" stroke="#fff" />

    <g fill="#444">
      {TIMES.filter(([, t]) => t).map(([x, t]) => (
        <g key={x}>
          <rect x={x} y="1039" width="1" height="18" fill="#808080" />
          <text x={x + 2} y="1051" className="text-[11px]">{t}</text>
        </g>
      ))}
      <rect x="1852" y="1039" width="1" height="18" fill="#808080" />
      <text x="51" y="1051" className="text-[13px] font-bold">03/14</text>
      <text x="1875" y="1051" className="text-[11px]">15:30:0</text>
    </g>
    <rect x="1391.5" y="1038.5" width="135" height="17" fill="#ffdb6b" stroke="#000" />
    <text x="1394" y="1051" fill="#333">2025/03/17(월) 14:11:35</text>
  </svg>
);

const ToolButton = ({ label, active, width, children }: { label: string; active?: boolean; width: string; children?: React.ReactNode }) => (
  <button
    type="button"
    aria-label={label}
    className={`flex h-full items-center justify-center border-r border-[#a0a0a0] last:border-r-0 ${width} ${active ? "bg-[#4a80c8] text-white" : "bg-[#ececec]"}`}
  >
    {children ?? label}
  </button>
);

const Group = ({ children, className = "" }: { children: React.ReactNode; className?: string }) => (
  <div className={`flex h-5 shrink-0 items-stretch border border-[#8c8c8c] ${className}`}>{children}</div>
);

const Arrow = ({ label }: { label: string }) => (
  <button type="button" aria-label={label} className="flex w-3 shrink-0 items-center justify-center border-l border-[#a0a0a0] bg-[#ececec]">
    <span className="border-x-[3px] border-t-4 border-x-transparent border-t-[#555]" />
  </button>
);

const TITLE = [
  "[0601] 주식종합차트 - 유통비율[58.2]", "거래대금[4,239(백만)]", "시가총액[723(억)]", "주식수[15,327(천)]",
  "유통수[8,915(천)]", "EPS[200]", "PBR[0.79]", "배당수익률[2.8]", "PER[23.63]", "ROA[1.9]", "유보율[1,102.5]",
  "부채비율[94.8]", "영업이익률[1.6]", "외국인보유[196(천)]",
];

const TitleBar = () => (
  <header className="flex h-6 items-center bg-[#3a5592] px-1 text-white">
    <span className="mr-1.5 flex size-3.5 shrink-0 items-center justify-center rounded-[3px] border border-white text-[11px] font-bold">1</span>
    <h1 className="flex min-w-0 flex-1 gap-2 overflow-hidden whitespace-nowrap text-[13px]">
      {TITLE.map((t) => <span key={t}>{t}</span>)}
    </h1>
    <div className="flex shrink-0 items-center gap-1.5 text-[#b4c4e4]">
      <button type="button" aria-label="복제"><Copy size={14} className="-scale-x-100" /></button>
      <button type="button" aria-label="내리기" className="h-3 w-3.5 border-b-2 border-current" />
      <button type="button" aria-label="분리"><Copy size={14} className="-scale-x-100" /></button>
      <button type="button" aria-label="고정"><Pin size={14} fill="currentColor" /></button>
      <button type="button" aria-label="글꼴" className="font-[Liberation_Serif] text-[15px] font-bold leading-4">T</button>
      <button type="button" aria-label="도움말" className="text-[15px] font-bold leading-4">?</button>
      <span className="h-3.5 w-px bg-[#8090b8]" />
      <button type="button" aria-label="최소화" className="h-3 w-2.5 border-b-2 border-current" />
      <button type="button" aria-label="이전 크기"><Copy size={13} className="-scale-x-100" /></button>
      <button type="button" aria-label="닫기"><X size={14} /></button>
    </div>
  </header>
);

const Toolbar = () => (
  <div className="flex h-5 items-center gap-[3px] text-[12px] text-black">
    <Group><ToolButton label="패널" width="w-4"><PanelLeft size={13} /></ToolButton></Group>
    <Group className="w-8 bg-white">
      <button type="button" className="flex-1 text-[#555]">주</button><Arrow label="주 목록" />
    </Group>
    <Group className="ml-0.5"><ToolButton label="전" width="w-3.5" /></Group>
    <Group className="-ml-0.5 w-[70px] bg-white">
      <input aria-label="종목코드" defaultValue="260660" className="w-0 flex-1 pl-px outline-none" />
      <Arrow label="종목 목록" />
    </Group>
    <Group className="-ml-0.5"><ToolButton label="종목검색" width="w-3.5"><Search size={12} className="text-[#555]" /></ToolButton></Group>
    <Group className="ml-0.5">
      <ToolButton label="소리" width="w-3"><Volume2 size={11} fill="#555" className="text-[#555]" /></ToolButton>
      <Arrow label="소리 설정" />
    </Group>
    <Group className="w-[81px] items-center bg-[#ececec]">
      <span className="flex h-full w-4 shrink-0 items-center justify-center bg-[#006a64] text-white">신</span>
      <span className="whitespace-nowrap pl-0.5 text-[13px] text-[#800040]">알리코제약</span>
    </Group>
    <Group className="ml-0.5">
      {["일", "주", "월", "년"].map((t) => <ToolButton key={t} label={t} width="w-[18px]" />)}
    </Group>
    <Group className="-ml-0.5">
      {["분", "초", "틱"].map((t) => <ToolButton key={t} label={t} active={t === "초"} width="w-[18px]" />)}
    </Group>
    <Group className="-ml-0.5">
      {["1", "3", "5", "10", "15", "30", "45", "60"].map((t) => <ToolButton key={t} label={t} active={t === "5"} width="w-[19px]" />)}
    </Group>
    <Group className="-ml-0.5 w-[38px] bg-white">
      <input aria-label="주기" defaultValue="5" className="w-0 flex-1 text-center outline-none" /><Arrow label="주기 목록" />
    </Group>
    <Group className="w-[30px] bg-white">
      <input aria-label="표시 개수" defaultValue="1838" className="w-full outline-none" />
    </Group>
    <span className="-ml-0.5 w-[30px] text-[#555]">/3600</span>
    <Group className="ml-px">
      <ToolButton label="캔들 추가" width="w-[18px]"><CandlestickChart size={13} className="text-[#444]" /></ToolButton>
      <ToolButton label="지표 추가" width="w-[19px]"><LineChart size={13} className="text-[#444]" /></ToolButton>
      <ToolButton label="저장" width="w-[19px]"><Save size={14} className="text-[#444]" /></ToolButton>
      <ToolButton label="설정" width="w-[18px]"><Settings size={14} className="text-[#444]" /></ToolButton>
    </Group>
    <label className="flex items-center gap-0.5">
      <input type="checkbox" className="size-[13px] appearance-none border border-[#777] bg-white" />D
    </label>
  </div>
);

const Cell = ({ w, c = "text-black", children }: { w: string; c?: string; children: React.ReactNode }) => (
  <span className={`shrink-0 whitespace-nowrap text-right ${w} ${c}`}>{children}</span>
);

const Bar = () => <span className="ml-0.5 h-full w-px shrink-0 bg-[#c4c4c4]" />;

const QuoteBar = () => (
  <div className="mt-[3px] flex h-5 items-stretch gap-[3px] text-[12px]">
    <div className="flex w-[749px] items-center border border-[#8c8c8c] bg-[#f0f0f0]">
      <Cell w="w-[74px]" c="text-[#e81c0c]">4,720▲</Cell>
      <Cell w="w-12" c="text-[#e81c0c]">30</Cell>
      <Cell w="w-[48px]" c="text-[#e81c0c]">+0.64%</Cell>
      <Bar />
      <Cell w="w-[69px]">907,730</Cell>
      <Cell w="w-[58px]" c="text-[#1c50c0]">8.97%</Cell>
      <Cell w="w-[41px]">5.92%</Cell>
      <Bar />
      <Cell w="w-[78px]">4,239백만</Cell>
      <Bar />
      <Cell w="w-[37px]">최우선</Cell>
      <Cell w="w-[43px]" c="text-[#e81c0c]">4,725</Cell>
      <Cell w="w-[50px]" c="text-[#e81c0c]">4,720</Cell>
      <Bar />
      <Cell w="w-[17px]">시</Cell>
      <Cell w="w-[41px]">4,690</Cell>
      <Cell w="w-[21px]">고</Cell>
      <Cell w="w-[40px]" c="text-[#e81c0c]">4,770</Cell>
      <Cell w="w-[21px]">저</Cell>
      <Cell w="w-[40px]" c="text-[#1c50c0]">4,555</Cell>
    </div>
    <button type="button" className="w-10 border border-[#8c8c8c] bg-[#f8d0cc]">매수</button>
    <button type="button" className="w-10 border border-[#8c8c8c] bg-[#c8e0f8]">매도</button>
  </div>
);

const NavButton = ({ label, d }: { label: string; d: string }) => (
  <button type="button" aria-label={label} className="flex h-4 w-4 shrink-0 items-center justify-center border border-r-[#707070] border-b-[#707070] border-l-white border-t-white bg-[#f0f0f0]">
    <svg viewBox="0 0 12 12" className="size-3"><path d={d} fill="#000" /></svg>
  </button>
);

const TOOL_ICONS: [string, string][] = [
  ["확대창", "M1 1h10v7M1 1v10h6M8 8h7v7H8zM11.5 8v7M8 11.5h7"],
  ["창 복사", "M1 1h9v9H1zM5 5h10v9H5zM5 7h10"],
  ["추세", "M1 1h14M1 14h14M1 11l3-4 3 3 3-4 3 1 2-3"],
  ["십자선", "M0 4h16M4 0v15M6 6l7 7M6 6h5M6 6v5"],
  ["고점선", "M1 2h14M1 14l3-4 2 1 3-7 3 6 3-1"],
  ["수직선", "M4 0v15M1 12l3-4 3 5 3-8 3 5 2-2"],
  ["추세선", "M1 14L12 2M1 12l3-3 3 4 3-7 4 7"],
  ["전체 지우기", "M1 8l6-6h6l-6 6zM1 8v3h6V8M7 11l6-6V2M9 10v4M12 10v4M15 10v4"],
  ["차트 겹침", "M4 1h11v9H4zM1 5v9h11v-4M5 8l3-3 2 2 4-4M2 13l3-3 3 2"],
];

const BottomBar = () => (
  <footer className="flex h-[17px] items-center bg-[#f0f0f0]">
    <NavButton label="왼쪽으로" d="M8 2v8L4 6z" />
    <div className="flex h-full min-w-0 flex-1 bg-[#f6f6f6]">
      <div className="w-[49%]" />
      <button type="button" aria-label="스크롤 위치" className="h-4 w-[51%] border border-r-[#707070] border-b-[#707070] border-l-white border-t-white bg-[#f0f0f0] shadow-[-1px_0_0_#aaa]" />
    </div>
    <div className="ml-0.5 flex gap-px">
      <NavButton label="재생" d="M4 2v8l4-4z" />
      <NavButton label="뒤로" d="M6 2v8L2 6zM11 2v8L7 6z" />
      <NavButton label="정지" d="M2 2h8v8H2z" />
      <NavButton label="앞으로" d="M2 2v8l4-4zM7 2v8l4-4z" />
    </div>
    <div className="mx-1.5 flex w-[70px] shrink-0 flex-col justify-between self-stretch pt-0.5 pb-px">
      <input
        type="range"
        aria-label="속도"
        defaultValue={52}
        className="h-2.5 w-full appearance-none bg-[linear-gradient(#888,#888)] bg-[length:100%_1px] bg-center bg-no-repeat [&::-webkit-slider-thumb]:h-2.5 [&::-webkit-slider-thumb]:w-1 [&::-webkit-slider-thumb]:appearance-none [&::-webkit-slider-thumb]:border [&::-webkit-slider-thumb]:border-[#777] [&::-webkit-slider-thumb]:bg-[#eee]"
      />
      <div className="flex justify-between px-0.5">
        {Array.from({ length: 9 }, (_, i) => <span key={i} className="h-[3px] w-px bg-black" />)}
      </div>
    </div>
    <div className="flex shrink-0 items-center gap-[3px] text-[#666]">
      {TOOL_ICONS.map(([name, d]) => (
        <button key={name} type="button" aria-label={name} className={name === "십자선" ? "bg-white" : ""}>
          <svg viewBox="0 0 16 16" className="size-3.5" fill="none" stroke="currentColor"><path d={d} /></svg>
        </button>
      ))}
      <button type="button" aria-label="돋보기"><Search size={14} /></button>
      <button type="button" aria-label="축소"><Minus size={14} strokeWidth={3} /></button>
      <button type="button" aria-label="확대"><Plus size={14} strokeWidth={3} /></button>
      <button type="button" className="w-3.5 text-[13px] font-bold leading-4">A</button>
    </div>
  </footer>
);

export default function App() {
  return (
    <div className="min-h-screen bg-black pt-px pb-[3px] [font-family:'Liberation_Sans','Noto_Sans_CJK_KR',sans-serif]">
      <TitleBar />
      <main className="ml-[3px] mr-1 bg-[#d0d0d0]">
        <div className="px-[3px] pt-[5px] pb-[3px]">
          <Toolbar />
          <QuoteBar />
        </div>
        <section className="border-x-[3px] border-[#e8e8e8]">
          <div className="border-t border-[#909090]">
            <MainChart />
            <LowerChart />
          </div>
          <BottomBar />
        </section>
        <div className="h-0.5 bg-[#e8e8e8]" />
      </main>
    </div>
  );
}
